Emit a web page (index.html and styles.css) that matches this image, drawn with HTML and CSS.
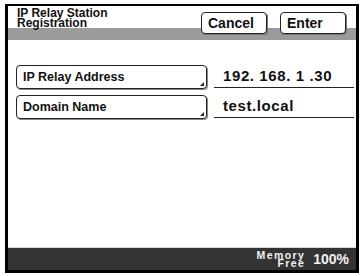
FILE: index.html
```html
<!DOCTYPE html>
<html>
<head>
<meta charset="utf-8">
<link rel="stylesheet" href="styles.css">
</head>
<body>
<div class="screen">
  <div class="header">
    <div class="title">IP Relay Station<br>Registration</div>
    <div class="actions">
      <div class="btn">Cancel</div>
      <div class="btn">Enter</div>
    </div>
  </div>
  <div class="content">
    <div class="row">
      <div class="key">IP Relay Address<span class="tri"></span></div>
      <div class="value">192. 168. 1 .30</div>
    </div>
    <div class="row">
      <div class="key">Domain Name<span class="tri"></span></div>
      <div class="value">test.local</div>
    </div>
  </div>
  <div class="footer">
    <div class="mem">Memory<br><span class="free">Free</span></div>
    <div class="pct">100%</div>
  </div>
</div>
</body>
</html>
```
FILE: styles.css
```css
html, body {
  margin: 0;
  padding: 0;
  background: #fff;
}
body {
  font-family: "Liberation Sans", Arial, sans-serif;
  font-weight: bold;
  color: #111;
}
.screen {
  box-sizing: border-box;
  margin: 4px 0 0 5px;
  width: 354px;
  height: 269px;
  border-style: solid;
  border-color: #000;
  border-width: 2px 3px 3px 3px;
  display: flex;
  flex-direction: column;
}
.header {
  height: 34px;
  display: flex;
  justify-content: space-between;
  align-items: flex-start;
  background: linear-gradient(#fff 0 22px, #9b9b9b 22px);
}
.title {
  padding: 3px 0 0 9px;
  font-size: 12px;
  line-height: 9.5px;
}
.actions {
  display: flex;
  gap: 13px;
  padding: 6px 10px 0 0;
}
.btn {
  box-sizing: border-box;
  width: 66px;
  height: 22px;
  background: #fff;
  border: 1px solid #222;
  border-radius: 4px;
  box-shadow: 1px 1px 0 #777;
  font-size: 14px;
  line-height: 20px;
  padding-left: 6px;
}
.content {
  flex: 1;
  display: flex;
  flex-direction: column;
  gap: 6px;
  padding: 25px 0 0 8px;
}
.row {
  display: flex;
  align-items: stretch;
  height: 24px;
}
.key {
  position: relative;
  box-sizing: border-box;
  width: 191px;
  border: 1px solid #222;
  border-radius: 4px;
  box-shadow: 1px 1px 0 #888;
  font-size: 12.5px;
  line-height: 22px;
  padding-left: 6px;
}
.tri {
  position: absolute;
  right: 2px;
  bottom: 2px;
  width: 0;
  height: 0;
  border-style: solid;
  border-width: 0 0 4px 4px;
  border-color: transparent transparent #222 transparent;
}
.value {
  box-sizing: border-box;
  margin-left: 7px;
  width: 140px;
  height: 23px;
  border-bottom: 1px solid #222;
  font-size: 15px;
  letter-spacing: 0.6px;
  line-height: 21px;
  padding-left: 9px;
}
.footer {
  height: 22px;
  border-top: 1px solid #d8d8d8;
  background: #333;
  display: flex;
  justify-content: flex-end;
  align-items: center;
  gap: 8px;
  padding-right: 7px;
  color: #f2f2f2;
}
.mem {
  font-size: 10.5px;
  line-height: 8px;
  text-align: right;
  letter-spacing: 1.4px;
}
.pct {
  font-size: 14px;
}
```
